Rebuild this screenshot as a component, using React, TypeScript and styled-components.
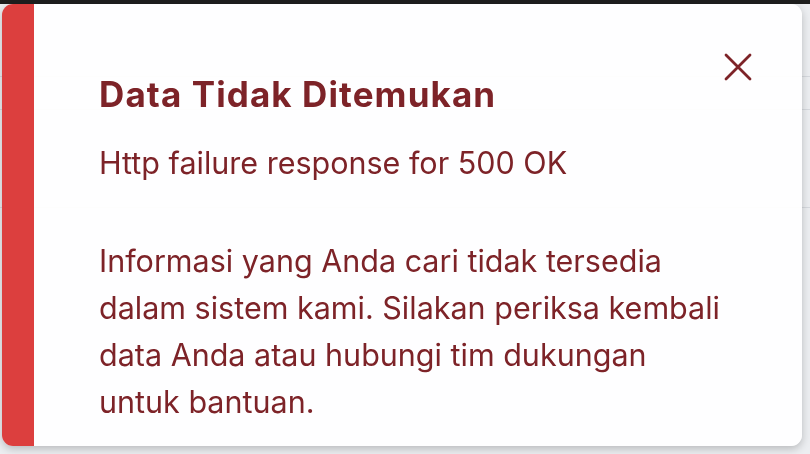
import { FC } from "react";
import styled, { createGlobalStyle } from "styled-components";

const GlobalStyle = createGlobalStyle`
  html, body {
    margin: 0;
    padding: 0;
    background: #eceef1;
    font-family: Inter, "Noto Sans", "Liberation Sans", sans-serif;
    overflow: hidden;
  }
`;

const TopBar = styled.div`
  height: 4px;
  background-color: #1e1e1e;
`;

const Page = styled.div`
  display: flex;
  flex-direction: column;
  height: 450px;
  background-color: #eceef1;
`;

const Row = styled.div<{ $height: number }>`
  height: ${(p) => p.$height}px;
  border-bottom: 1px solid #d6d9de;
  box-sizing: border-box;
`;

const Toast = styled.div`
  position: fixed;
  top: 4px;
  left: 2px;
  width: 800px;
  height: 442px;
  box-sizing: border-box;
  display: flex;
  flex-direction: column;
  padding: 70px 72px 0 65px;
  background-color: rgba(255, 255, 255, 0.94);
  border-left: 32px solid #dc3f3e;
  border-radius: 11px;
  box-shadow: 0 3px 8px rgba(0, 0, 0, 0.22);
  color: #7d2328;
`;

const Title = styled.h2`
  margin: 0;
  font-size: 35px;
  line-height: 40px;
  font-weight: 700;
  letter-spacing: 1.1px;
`;

const Text = styled.p<{ $gap: number }>`
  margin: ${(p) => p.$gap}px 0 0;
  font-size: 30.5px;
  line-height: 47px;
  font-weight: 400;
`;

const CloseButton = styled.button`
  position: absolute;
  top: 49px;
  right: 50px;
  width: 28px;
  height: 28px;
  padding: 0;
  border: none;
  background: transparent;
  color: #7d2328;
  cursor: pointer;
  display: flex;
  align-items: center;
  justify-content: center;
`;

const CloseIcon: FC = () => (
  <svg width="28" height="28" viewBox="0 0 28 28" fill="none">
    <path
      d="M2 2 L26 26 M26 2 L2 26"
      stroke="currentColor"
      strokeWidth="2.8"
      strokeLinecap="round"
    />
  </svg>
);

const App: FC = () => {
  return (
    <>
      <GlobalStyle />
      <TopBar />
      <Page>
        <Row $height={73} />
        <Row $height={33} />
        <Row $height={98} />
      </Page>
      <Toast role="alert">
        <CloseButton aria-label="Tutup">
          <CloseIcon />
        </CloseButton>
        <Title>Data Tidak Ditemukan</Title>
        <Text $gap={25}>Http failure response for 500 OK</Text>
        <Text $gap={51}>
          Informasi yang Anda cari tidak tersedia dalam sistem kami. Silakan periksa kembali data Anda
          atau hubungi tim dukungan untuk bantuan.
        </Text>
      </Toast>
    </>
  );
};

export default App;
